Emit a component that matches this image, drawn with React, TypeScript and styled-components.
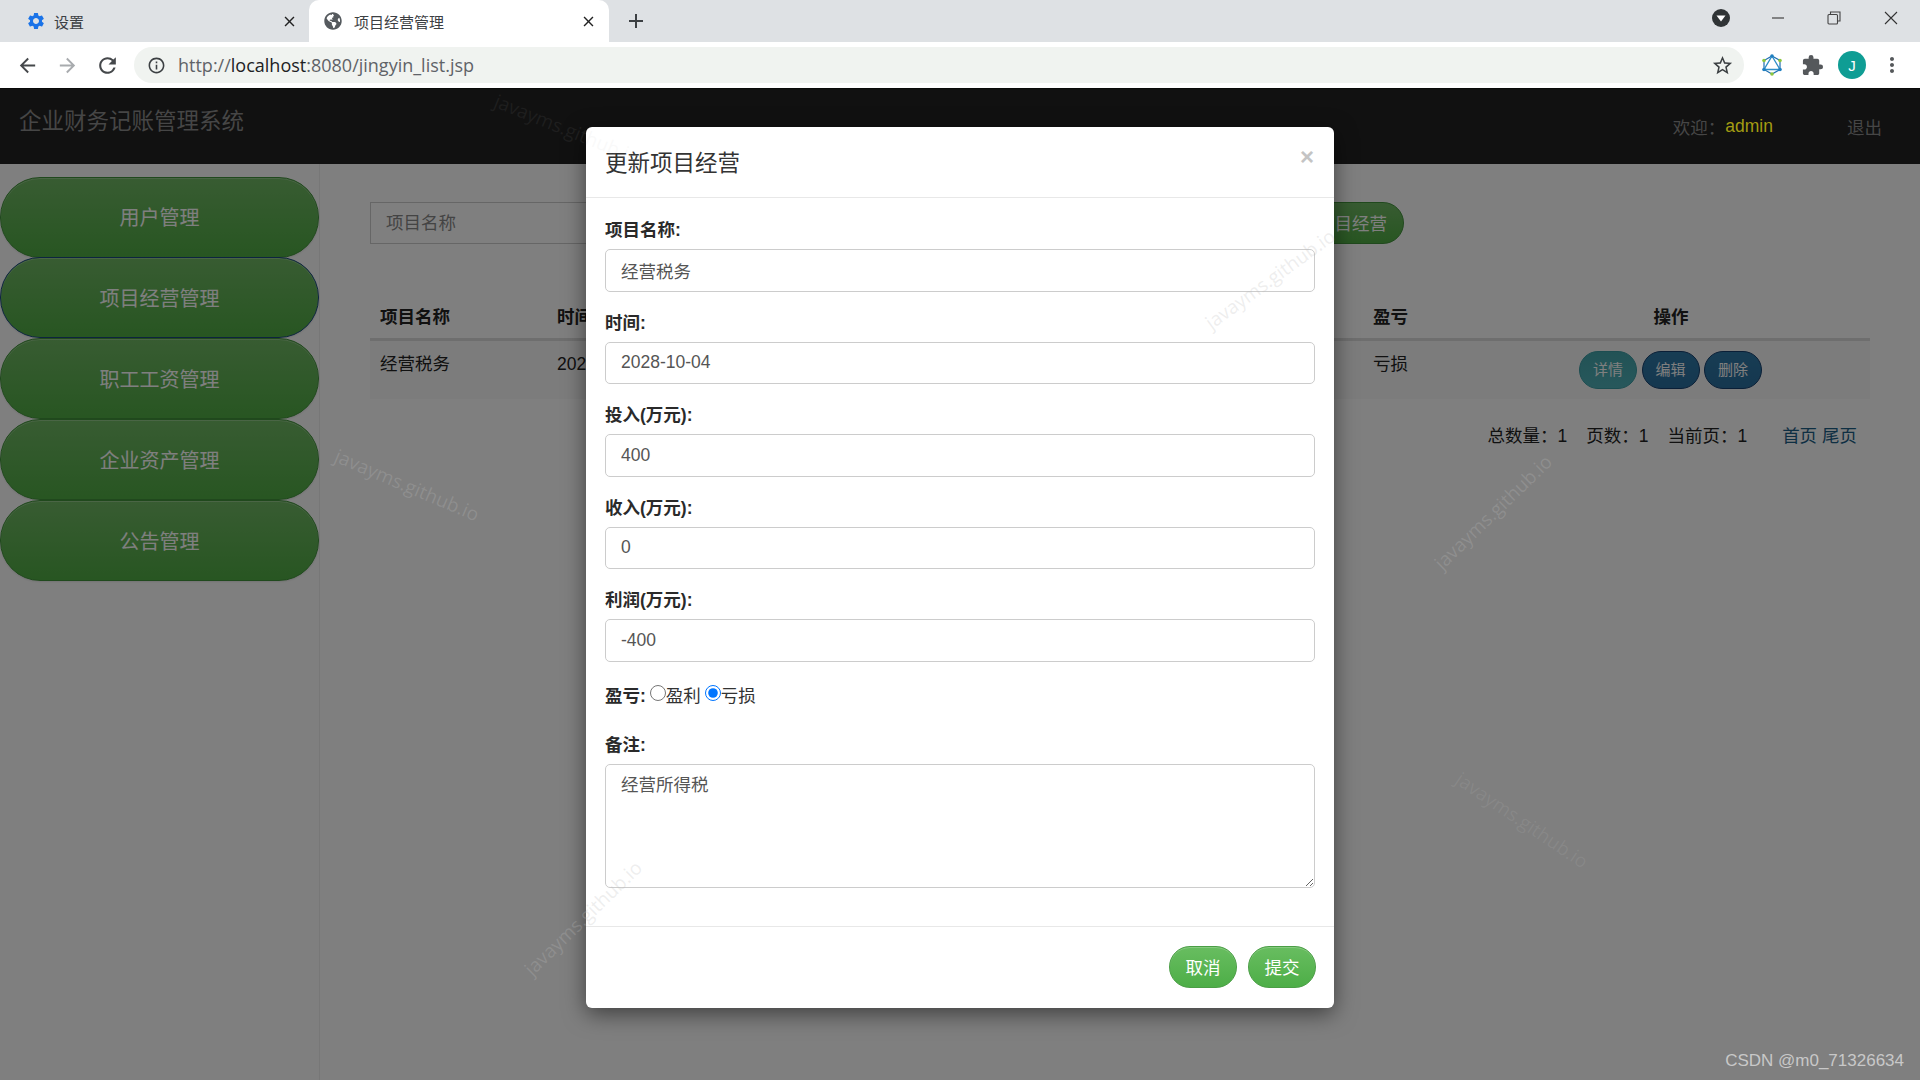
import * as React from 'react';
import styled, { createGlobalStyle } from 'styled-components';
import {
  MdArrowBack,
  MdArrowForward,
  MdClose,
  MdExtension,
  MdInfoOutline,
  MdMoreVert,
  MdRefresh,
  MdSettings,
  MdStarBorder,
} from 'react-icons/md';
import { FaGlobeAmericas } from 'react-icons/fa';

const menuItems = ['用户管理', '项目经营管理', '职工工资管理', '企业资产管理', '公告管理'];

const formFields = [
  { label: '项目名称:', value: '经营税务' },
  { label: '时间:', value: '2028-10-04' },
  { label: '投入(万元):', value: '400' },
  { label: '收入(万元):', value: '0' },
  { label: '利润(万元):', value: '-400' },
];

const columnWidths = [177, 200, 208, 204, 204, 107, 400];

const watermarks = [
  { x: 407, y: 397, r: 23, o: 1 },
  { x: 1270, y: 191, r: -36, o: 1 },
  { x: 1493, y: 424, r: -44, o: 1 },
  { x: 1522, y: 732, r: 34, o: 0.55 },
  { x: 583, y: 830, r: -44, o: 1 },
  { x: 567, y: 41, r: 22, o: 0.3 },
];

const GlobalStyle = createGlobalStyle`
  html, body {
    margin: 0;
    padding: 0;
    background: #fff;
  }
  * {
    box-sizing: border-box;
  }
`;

const Page = styled.div`
  position: relative;
  display: flex;
  flex-direction: column;
  width: 1920px;
  height: 1080px;
  overflow: hidden;
  font-family: 'Liberation Sans', 'Noto Sans CJK SC', sans-serif;
  font-size: 17.5px;
  color: #333;
`;

const TabStrip = styled.div`
  display: flex;
  align-items: flex-end;
  height: 42px;
  background: #dee1e4;
`;

const Tab = styled.div<{ $active?: boolean }>`
  display: flex;
  align-items: center;
  width: ${p => (p.$active ? '300px' : '309px')};
  height: 42px;
  padding: ${p => (p.$active ? '0 12px 0 15px' : '0 11px 0 26px')};
  background: ${p => (p.$active ? '#fff' : 'transparent')};
  border-radius: 10px 10px 0 0;
  font-size: 15px;
  color: #3c4043;

  svg:first-child {
    flex: none;
    margin-right: ${p => (p.$active ? '12px' : '8px')};
  }
`;

const TabTitle = styled.span`
  flex: 1;
`;

const NewTab = styled.div`
  display: flex;
  align-items: center;
  justify-content: center;
  width: 54px;
  height: 42px;
  color: #3c4043;
`;

const WindowControls = styled.div`
  display: flex;
  align-items: center;
  margin-left: auto;
  height: 42px;
`;

const WindowButton = styled.div<{ $w: number; $gap?: number }>`
  display: flex;
  align-items: center;
  justify-content: center;
  width: ${p => p.$w}px;
  height: 36px;
  margin-bottom: 6px;
  margin-left: ${p => p.$gap ?? 0}px;
`;

const Toolbar = styled.div`
  display: flex;
  align-items: center;
  height: 46px;
  padding: 0 8px 0 7px;
  background: #fff;
`;

const NavButton = styled.div<{ $dim?: boolean; $gap?: number }>`
  display: flex;
  align-items: center;
  justify-content: center;
  width: 41px;
  height: 40px;
  margin-left: ${p => p.$gap ?? 0}px;
  color: ${p => (p.$dim ? '#a8abae' : '#45484b')};
`;

const Omnibox = styled.div`
  display: flex;
  align-items: center;
  width: 1610px;
  height: 36px;
  margin-left: auto;
  padding: 0 10px 0 13px;
  border-radius: 18px;
  background: #f0f3f0;
  color: #5f6368;
  font-family: 'Open Sans', 'Liberation Sans', sans-serif;
  font-size: 18px;
`;

const InfoIcon = styled.span`
  display: flex;
  margin-right: 12px;
  color: #3c4043;
`;

const Host = styled.span`
  color: #202124;
`;

const StarIcon = styled.span`
  display: flex;
  margin-left: auto;
  color: #3c4043;
`;

const ExtensionSlot = styled.div<{ $gap?: number }>`
  display: flex;
  align-items: center;
  justify-content: center;
  flex: none;
  width: 40px;
  height: 40px;
  margin-left: ${p => p.$gap ?? 0}px;
  color: #55585b;
`;

const Avatar = styled.div`
  display: flex;
  align-items: center;
  justify-content: center;
  width: 28px;
  height: 28px;
  border-radius: 50%;
  background: #0f9d94;
  color: #fff;
  font-family: 'Liberation Sans', sans-serif;
  font-size: 15px;
`;

const Viewport = styled.div`
  position: relative;
  flex: 1;
  display: flex;
  flex-direction: column;
`;

const Header = styled.header`
  display: flex;
  align-items: center;
  height: 76px;
  padding: 0 38px 0 19px;
  background: #111;
  color: #464646;
  border-top: 1px solid #0a0a0a;
`;

const Brand = styled.div`
  font-size: 22.5px;
  margin-top: -15px;
  margin-right: auto;
`;

const HeaderText = styled.span`
  margin-top: -1px;
`;

const UserName = styled.span`
  margin-right: 74px;
  color: #a49c12;
`;

const Body = styled.div`
  flex: 1;
  display: flex;
`;

const Sidebar = styled.nav`
  display: flex;
  flex-direction: column;
  flex: none;
  width: 320px;
  padding-top: 12.5px;
  border-right: 1px solid #eee;
`;

const MenuButton = styled.div<{ $active?: boolean }>`
  display: flex;
  align-items: center;
  justify-content: center;
  width: 319px;
  height: 81px;
  flex: none;
  margin-bottom: -0.1px;
  padding-bottom: 1px;
  border: 1px solid ${p => (p.$active ? '#1b4a80' : '#41923b')};
  border-radius: 40px;
  background: linear-gradient(#70b864, #50ac44);
  box-shadow: inset 0 1px 0 rgba(255, 255, 255, 0.25), 0 1px 2px rgba(0, 0, 0, 0.1);
  color: #fff;
  font-size: 20px;
`;

const Content = styled.main`
  flex: 1;
  padding: 38px 50px 0 50px;
`;

const SearchRow = styled.div`
  display: flex;
  justify-content: space-between;
  width: 1034px;
`;

const SearchInput = styled.input`
  width: 400px;
  height: 42px;
  padding: 0 15px;
  border: 1.5px solid #ccc;
  background: #fff;
  font: inherit;
  color: #333;

  &::placeholder {
    color: #888;
  }
`;

const AddButton = styled.div`
  display: flex;
  align-items: center;
  height: 42px;
  padding: 0 16px 2px;
  border: 1px solid #41923b;
  border-radius: 21px;
  background: linear-gradient(#70b864, #50ac44);
  color: #fff;
`;

const DataTable = styled.table`
  width: 1500px;
  margin-top: 49px;
  border-collapse: collapse;
  table-layout: fixed;

  th {
    height: 46px;
    padding: 0 10px;
    border-bottom: 3px solid #ddd;
    text-align: left;
    color: #222;
    font-weight: 700;
  }

  td {
    padding: 10px;
    vertical-align: top;
    line-height: 27px;
    color: #222;
  }

  tbody tr {
    background: #f9f9f9;
  }
`;

const Column = styled.col<{ $w: number }>`
  width: ${p => p.$w}px;
`;

const OpHead = styled.th`
  && {
    padding-left: 12px;
    text-align: center;
  }
`;

const OpButtons = styled.div`
  display: flex;
  justify-content: center;
  gap: 4.5px;
  padding-left: 1px;
`;

const OpButton = styled.div<{ $kind: 'info' | 'primary' }>`
  display: flex;
  align-items: center;
  justify-content: center;
  width: 58px;
  height: 38px;
  border-radius: 19px;
  border: 1px solid ${p => (p.$kind === 'info' ? '#3b9ba3' : '#153f6e')};
  background: ${p =>
    p.$kind === 'info' ? 'linear-gradient(#44a5ab, #4fb0b8)' : 'linear-gradient(#2f7aa8, #2a6f9f)'};
  color: #fff;
  font-size: 15px;
`;

const Pager = styled.div`
  display: flex;
  justify-content: flex-end;
  gap: 19px;
  width: 1487px;
  margin-top: 24px;
  line-height: 27px;
  color: #222;
`;

const PagerLinks = styled.span`
  margin-left: 16px;
  color: #1c5e87;
`;

const Backdrop = styled.div`
  position: absolute;
  left: 0;
  right: 0;
  top: 76px;
  bottom: 0;
  background: rgba(0, 0, 0, 0.5);
`;

const ModalLayer = styled.div`
  position: absolute;
  inset: 0;
  display: flex;
  justify-content: center;
  padding-top: 39px;
`;

const Modal = styled.div`
  width: 748px;
  height: 881px;
  border-radius: 6px;
  background: #fff;
  box-shadow: 0 6px 22px rgba(0, 0, 0, 0.5);
`;

const ModalHead = styled.div`
  display: flex;
  align-items: center;
  justify-content: space-between;
  height: 71px;
  padding: 0 19px;
  border-bottom: 1.5px solid #e8e8e8;
`;

const ModalTitle = styled.h4`
  margin: -2px 0 0;
  font-size: 22.5px;
  font-weight: 400;
  color: #333;
`;

const CloseMark = styled.span`
  margin-top: -10px;
  margin-right: 1px;
  font-size: 24px;
  font-weight: 700;
  line-height: 1;
  color: #c4c4c4;
`;

const ModalBody = styled.div`
  padding: 18px 19px 0;
`;

const Field = styled.div`
  margin-bottom: 17px;
`;

const FieldLabel = styled.label`
  display: block;
  height: 26px;
  margin-bottom: 7px;
  font-weight: 700;
  line-height: 28px;
  color: #2a2a2a;
`;

const TextInput = styled.input`
  display: block;
  width: 100%;
  height: 42.5px;
  padding: 0 15px;
  border: 1.5px solid #ccc;
  border-radius: 5px;
  background: #fff;
  font: inherit;
  color: #555;
  outline: none;
`;

const RadioRow = styled.div`
  display: flex;
  align-items: center;
  height: 32px;
  margin-bottom: 20px;
`;

const RadioLabel = styled.span`
  font-weight: 700;
  color: #2a2a2a;
`;

const RadioOption = styled.label`
  display: flex;
  align-items: center;

  input {
    width: 16px;
    height: 16px;
    margin: -3px 0 0 4px;
  }
`;

const NoteInput = styled.textarea`
  display: block;
  width: 100%;
  height: 124px;
  padding: 8px 15px;
  border: 1.5px solid #ccc;
  border-radius: 5px;
  background: #fff;
  font: inherit;
  line-height: 25px;
  color: #555;
  outline: none;
`;

const ModalFoot = styled.div`
  display: flex;
  justify-content: flex-end;
  gap: 11px;
  margin-top: 38px;
  padding: 19px 18px 0;
  border-top: 1.5px solid #e8e8e8;
`;

const FootButton = styled.div`
  display: flex;
  align-items: center;
  justify-content: center;
  width: 68px;
  height: 42px;
  border: 1px solid #4a9e45;
  border-radius: 21px;
  background: linear-gradient(#68bd60, #4dae47);
  box-shadow: inset 0 1px 0 rgba(255, 255, 255, 0.2);
  color: #fff;
`;

const Watermark = styled.span<{ $x: number; $y: number; $r: number; $o: number }>`
  position: absolute;
  left: ${p => p.$x}px;
  top: ${p => p.$y}px;
  transform: translate(-50%, -50%) rotate(${p => p.$r}deg);
  opacity: ${p => p.$o};
  font-family: 'Open Sans', sans-serif;
  font-size: 19px;
  white-space: nowrap;
  color: rgba(190, 190, 190, 0.26);
  pointer-events: none;
`;

const SourceMark = styled.span`
  position: absolute;
  right: 16px;
  bottom: 9px;
  font-size: 17px;
  color: #c8c8c8;
`;

const GraphqlIcon = () => (
  <svg width="24" height="24" viewBox="0 0 24 24" fill="none">
    <path d="M12 3 20 7.5V16.5L12 21 4 16.5V7.5Z" stroke="#1f6fb0" strokeWidth="1.2" />
    <path d="M12 3 20 16.5H4Z" stroke="#2f8fc8" strokeWidth="1.4" />
    <circle cx="12" cy="3" r="1.8" fill="#1f7fc0" />
    <circle cx="20" cy="7.5" r="1.8" fill="#8cc63f" />
    <circle cx="4" cy="7.5" r="1.8" fill="#8cc63f" />
    <circle cx="20" cy="16.5" r="1.8" fill="#1f7fc0" />
    <circle cx="4" cy="16.5" r="1.8" fill="#1f7fc0" />
    <circle cx="12" cy="21" r="1.8" fill="#8cc63f" />
  </svg>
);

const ProfileDropdownIcon = () => (
  <svg width="20" height="20" viewBox="0 0 20 20">
    <circle cx="10" cy="10" r="9" fill="#303436" />
    <path d="M5.5 7.5h9L10 13.5Z" fill="#fff" />
  </svg>
);

const App: React.FunctionComponent = () => {
  return (
    <Page>
      <GlobalStyle />
      <TabStrip>
        <Tab>
          <MdSettings size={20} color="#1a73e8" />
          <TabTitle>设置</TabTitle>
          <MdClose size={17} color="#222" />
        </Tab>
        <Tab $active>
          <FaGlobeAmericas size={18} color="#555a5e" />
          <TabTitle>项目经营管理</TabTitle>
          <MdClose size={17} color="#222" />
        </Tab>
        <NewTab>
          <svg width="16" height="16" viewBox="0 0 16 16">
            <path d="M8 1v14M1 8h14" stroke="#3c4043" strokeWidth="2" />
          </svg>
        </NewTab>
        <WindowControls>
          <WindowButton $w={36}>
            <ProfileDropdownIcon />
          </WindowButton>
          <WindowButton $w={56} $gap={11}>
            <svg width="14" height="14" viewBox="0 0 14 14">
              <path d="M1 7h12" stroke="#444" strokeWidth="1.2" />
            </svg>
          </WindowButton>
          <WindowButton $w={56}>
            <svg width="14" height="14" viewBox="0 0 14 14" fill="none">
              <path d="M3.5 3V1H13v9h-2.5" stroke="#444" strokeWidth="1.1" />
              <rect x="1" y="3.5" width="9.5" height="9.5" rx="1" stroke="#444" strokeWidth="1.1" />
            </svg>
          </WindowButton>
          <WindowButton $w={58}>
            <svg width="14" height="14" viewBox="0 0 14 14">
              <path d="M1 1l12 12M13 1 1 13" stroke="#333" strokeWidth="1.1" />
            </svg>
          </WindowButton>
        </WindowControls>
      </TabStrip>

      <Toolbar>
        <NavButton>
          <MdArrowBack size={23} />
        </NavButton>
        <NavButton $dim $gap={-1}>
          <MdArrowForward size={23} />
        </NavButton>
        <NavButton $gap={-1}>
          <MdRefresh size={25} />
        </NavButton>
        <Omnibox>
          <InfoIcon>
            <MdInfoOutline size={19} />
          </InfoIcon>
          http://<Host>localhost</Host>:8080/jingyin_list.jsp
          <StarIcon>
            <MdStarBorder size={23} />
          </StarIcon>
        </Omnibox>
        <ExtensionSlot $gap={8}>
          <GraphqlIcon />
        </ExtensionSlot>
        <ExtensionSlot>
          <MdExtension size={23} />
        </ExtensionSlot>
        <ExtensionSlot>
          <Avatar>J</Avatar>
        </ExtensionSlot>
        <ExtensionSlot>
          <MdMoreVert size={24} />
        </ExtensionSlot>
      </Toolbar>

      <Viewport>
        <Header>
          <Brand>企业财务记账管理系统</Brand>
          <HeaderText>欢迎：</HeaderText>
          <UserName>admin</UserName>
          <HeaderText>退出</HeaderText>
        </Header>
        <Body>
          <Sidebar>
            {menuItems.map((item, i) => (
              <MenuButton key={item} $active={i === 1}>
                {item}
              </MenuButton>
            ))}
          </Sidebar>
          <Content>
            <SearchRow>
              <SearchInput placeholder="项目名称" readOnly />
              <AddButton>新增项目经营</AddButton>
            </SearchRow>
            <DataTable>
              <colgroup>
                {columnWidths.map((w, i) => (
                  <Column key={i} $w={w} />
                ))}
              </colgroup>
              <thead>
                <tr>
                  <th>项目名称</th>
                  <th>时间</th>
                  <th>投入(万元)</th>
                  <th>收入(万元)</th>
                  <th>利润(万元)</th>
                  <th>盈亏</th>
                  <OpHead>操作</OpHead>
                </tr>
              </thead>
              <tbody>
                <tr>
                  <td>经营税务</td>
                  <td>2028-10-04</td>
                  <td>400</td>
                  <td>0</td>
                  <td>-400</td>
                  <td>亏损</td>
                  <td>
                    <OpButtons>
                      <OpButton $kind="info">详情</OpButton>
                      <OpButton $kind="primary">编辑</OpButton>
                      <OpButton $kind="primary">删除</OpButton>
                    </OpButtons>
                  </td>
                </tr>
              </tbody>
            </DataTable>
            <Pager>
              <span>总数量：1</span>
              <span>页数：1</span>
              <span>当前页：1</span>
              <PagerLinks>首页 尾页</PagerLinks>
            </Pager>
          </Content>
        </Body>

        <Backdrop />
        <ModalLayer>
          <Modal>
            <ModalHead>
              <ModalTitle>更新项目经营</ModalTitle>
              <CloseMark>×</CloseMark>
            </ModalHead>
            <ModalBody>
              {formFields.map(field => (
                <Field key={field.label}>
                  <FieldLabel>{field.label}</FieldLabel>
                  <TextInput defaultValue={field.value} readOnly />
                </Field>
              ))}
              <RadioRow>
                <RadioLabel>盈亏:</RadioLabel>
                <RadioOption>
                  <input type="radio" name="profit" readOnly />
                  盈利
                </RadioOption>
                <RadioOption>
                  <input type="radio" name="profit" defaultChecked readOnly />
                  亏损
                </RadioOption>
              </RadioRow>
              <FieldLabel>备注:</FieldLabel>
              <NoteInput defaultValue="经营所得税" readOnly />
            </ModalBody>
            <ModalFoot>
              <FootButton>取消</FootButton>
              <FootButton>提交</FootButton>
            </ModalFoot>
          </Modal>
        </ModalLayer>

        {watermarks.map(mark => (
          <Watermark key={mark.x} $x={mark.x} $y={mark.y} $r={mark.r} $o={mark.o}>
            javayms.github.io
          </Watermark>
        ))}
        <SourceMark>CSDN @m0_71326634</SourceMark>
      </Viewport>
    </Page>
  );
};

export default App;
